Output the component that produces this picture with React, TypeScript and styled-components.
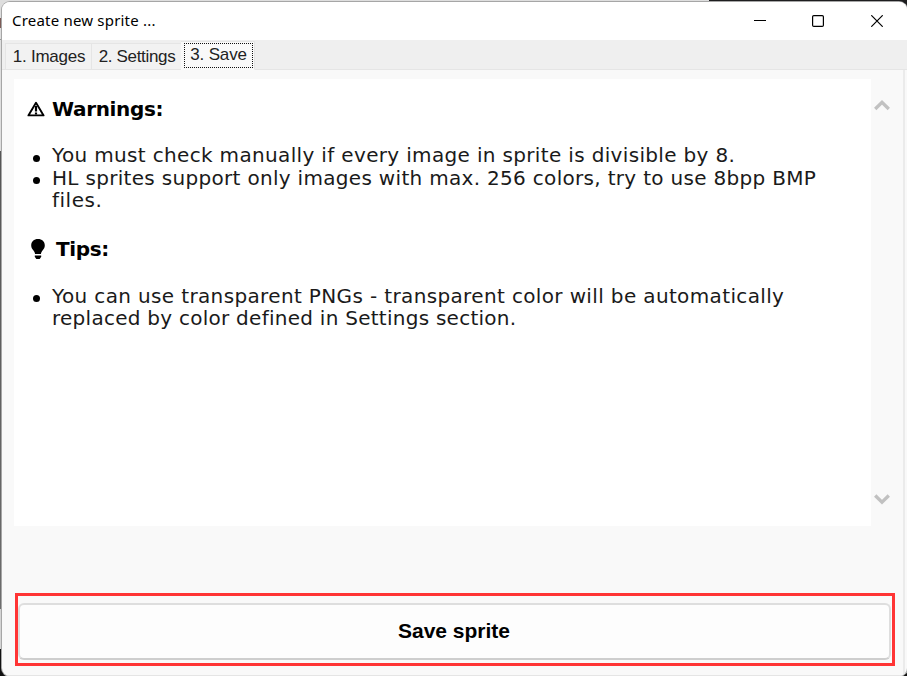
import React from "react";
import styled, { createGlobalStyle } from "styled-components";

const GlobalStyle = createGlobalStyle`
  * { box-sizing: border-box; }
  html, body { margin: 0; padding: 0; overflow: hidden; }
`;

const Desktop = styled.div`
  width: 907px;
  height: 676px;
  padding: 2px 0 0 2px;
  background:
    linear-gradient(#1d1d1f, #1d1d1f) 709px 0 / 198px 30px no-repeat,
    linear-gradient(#9a9a9a, #9a9a9a) 0 39px / 2px 1px no-repeat,
    linear-gradient(#7c5b57, #7c5b57) 0 18px / 2px 10px no-repeat,
    linear-gradient(#111, #111) 0 649px / 907px 27px no-repeat,
    linear-gradient(#d4d4d4, #d4d4d4) 0 609px / 2px 40px no-repeat,
    linear-gradient(#555, #6d6d6d) 0 151px / 2px 458px no-repeat,
    #dedede;
`;

const Window = styled.main`
  display: flex;
  flex-direction: column;
  width: 905px;
  height: 674px;
  overflow: hidden;
  border-radius: 8px;
  background: #f9f9f9;
  box-shadow: 0 0 0 1px #a6a6a6;
`;

const TitleBar = styled.header`
  display: flex;
  flex: none;
  height: 38px;
  padding-right: 1px;
  background: #fff;
  color: #000;
`;

const Title = styled.h1`
  flex: 1;
  margin: 0;
  padding-left: 10px;
  font: 400 15px/37px "Noto Sans", sans-serif;
  letter-spacing: 0.2px;
`;

const WindowButton = styled.button`
  display: flex;
  align-items: center;
  justify-content: center;
  width: 58.5px;
  height: 38px;
  padding: 0;
  border: 0;
  background: none;
`;

const TabStrip = styled.nav`
  display: flex;
  flex: none;
  align-items: flex-end;
  height: 30px;
  padding-left: 3px;
  background: #efefef;
  box-shadow: inset 0 -1px #e5e5e5;
`;

const Tab = styled.button<{ $width: number; $spacing: number; $active?: boolean }>`
  width: ${(p) => p.$width}px;
  height: ${(p) => (p.$active ? 29 : 27)}px;
  padding: ${(p) => (p.$active ? "1px 1px 2px 3px" : "1px 0 0 1px")};
  border: 1px solid #e5e5e5;
  border-left-width: ${(p) => (p.$active ? 0 : 1)}px;
  border-right-width: ${(p) => (p.$active ? 1 : 0)}px;
  border-bottom-color: ${(p) => (p.$active ? "#f9f9f9" : "#e5e5e5")};
  background: ${(p) => (p.$active ? "#f9f9f9" : "#f2f2f2")};
  color: #222;
  font: 17px/24px "Liberation Sans", Arial, sans-serif;
  letter-spacing: ${(p) => p.$spacing}px;
  white-space: nowrap;
`;

const Focus = styled.span`
  display: block;
  height: 25px;
  border: 1px dotted #111;
  line-height: 21px;
`;

const TabPage = styled.section`
  display: flex;
  flex: 1;
  flex-direction: column;
  margin-right: 2px;
  padding: 9px 8px 0 12px;
  border-right: 2px solid #ebebeb;
  border-bottom: 1px solid #e5e5e5;
`;

const Viewer = styled.div`
  display: flex;
  height: 447px;
`;

const Document = styled.article`
  width: 857px;
  padding: 18px 13px 0;
  background: #fff;
  color: #1a1a1a;
  font: 20px/22.5px Verdana, "DejaVu Sans", sans-serif;
`;

const Heading = styled.h2<{ $gap: number; $indent?: number }>`
  display: flex;
  align-items: center;
  gap: ${(p) => p.$gap}px;
  height: 24px;
  margin: 0;
  padding-left: ${(p) => p.$indent ?? 0}px;
  color: #000;
  font: 700 20px/24px Verdana, "DejaVu Sans", sans-serif;
  letter-spacing: -0.35px;
`;

const Points = styled.ul<{ $top: number; $bottom?: number }>`
  margin: ${(p) => p.$top}px 0 ${(p) => p.$bottom ?? 0}px;
  padding: 0;
  list-style: none;
`;

const Point = styled.li`
  display: flex;
`;

const Bullet = styled.span`
  flex: none;
  width: 7px;
  height: 7px;
  margin: 10.5px 12px 0 6px;
  border-radius: 50%;
  background: #000;
`;

const Line = styled.span<{ $spacing: number }>`
  display: block;
  letter-spacing: ${(p) => p.$spacing}px;
  white-space: nowrap;
`;

const Scrollbar = styled.div`
  display: flex;
  flex-direction: column;
  justify-content: space-between;
  padding: 20px 0 20px 2.5px;
`;

const SaveArea = styled.div`
  width: 880px;
  height: 73px;
  margin: 67px 0 0 1px;
  padding: 7px 0 0;
  border: 3px solid #ff3434;
`;

const SaveButton = styled.button`
  display: block;
  width: 873px;
  height: 57px;
  padding: 0 1px 2px 0;
  border: 2px solid #dedede;
  border-bottom-color: #cecece;
  border-radius: 6px;
  background: #fdfdfd;
  color: #000;
  font: 700 21px/51px "Liberation Sans", Arial, sans-serif;
`;

const Chevron = ({ down = false }: { down?: boolean }) => (
  <svg width="16" height="13" viewBox="0 0 16 13" fill="none" stroke="#c1c1c1" strokeWidth="3.3">
    <path d={down ? "M1.2 2.500 8 9.200 14.800 2.500" : "M1.200 10 8 3.300 14.800 10"} />
  </svg>
);

const WarningIcon = () => (
  <svg width="18" height="16" viewBox="0 0 18 16" fill="none" stroke="#000">
    <path d="M9 1.800 16.600 14.400H1.400Z" strokeWidth="1.900" strokeLinejoin="round" />
    <path d="M9 5v5.500M9 11.400v2" strokeWidth="2.200" />
  </svg>
);

const BulbIcon = () => (
  <svg width="14" height="20" viewBox="0 0 14 20" fill="#000">
    <path d="M7 0C3 0 .2 2.7.2 6.400c0 2.100 1 3.500 2.100 4.900 1 1.300 1.500 2.200 1.800 3.700h5.800c.3-1.500.8-2.400 1.800-3.700 1.100-1.400 2.100-2.800 2.100-4.900C13.800 2.700 11 0 7 0Z" />
    <path d="M3.800 16.400h6.400v1.300L8.700 20H5.300L3.800 17.700Z" />
  </svg>
);

export default function App() {
  return (
    <>
      <GlobalStyle />
      <Desktop>
        <Window>
          <TitleBar>
            <Title>Create new sprite ...</Title>
            <WindowButton aria-label="Minimize">
              <svg width="12" height="12"><path d="M0 5.500H12" stroke="#000" /></svg>
            </WindowButton>
            <WindowButton aria-label="Maximize">
              <svg width="12" height="12" fill="none" stroke="#000" strokeWidth="1.200">
                <rect x=".6" y=".6" width="10.800" height="10.800" rx="1.200" />
              </svg>
            </WindowButton>
            <WindowButton aria-label="Close">
              <svg width="12" height="12" stroke="#000" strokeWidth="1.200">
                <path d="m.3.3 11.400 11.400M11.700.3.3 11.700" />
              </svg>
            </WindowButton>
          </TitleBar>
          <TabStrip>
            <Tab $width={86} $spacing={-0.25}>1. Images</Tab>
            <Tab $width={90} $spacing={-0.33}>2. Settings</Tab>
            <Tab $width={74} $spacing={-0.15} $active><Focus>3. Save</Focus></Tab>
          </TabStrip>
          <TabPage>
            <Viewer>
              <Document>
                <Heading $gap={7}><WarningIcon />Warnings:</Heading>
                <Points $top={23} $bottom={25}>
                  <Point>
                    <Bullet />
                    <Line $spacing={0.34}>You must check manually if every image in sprite is divisible by 8.</Line>
                  </Point>
                  <Point>
                    <Bullet />
                    <div>
                      <Line $spacing={0.31}>HL sprites support only images with max. 256 colors, try to use 8bpp BMP</Line>
                      <Line $spacing={0.5}>files.</Line>
                    </div>
                  </Point>
                </Points>
                <Heading $gap={11} $indent={4}><BulbIcon />Tips:</Heading>
                <Points $top={24}>
                  <Point>
                    <Bullet />
                    <div>
                      <Line $spacing={0.36}>You can use transparent PNGs - transparent color will be automatically</Line>
                      <Line $spacing={0.26}>replaced by color defined in Settings section.</Line>
                    </div>
                  </Point>
                </Points>
              </Document>
              <Scrollbar><Chevron /><Chevron down /></Scrollbar>
            </Viewer>
            <SaveArea><SaveButton>Save sprite</SaveButton></SaveArea>
          </TabPage>
        </Window>
      </Desktop>
    </>
  );
}
